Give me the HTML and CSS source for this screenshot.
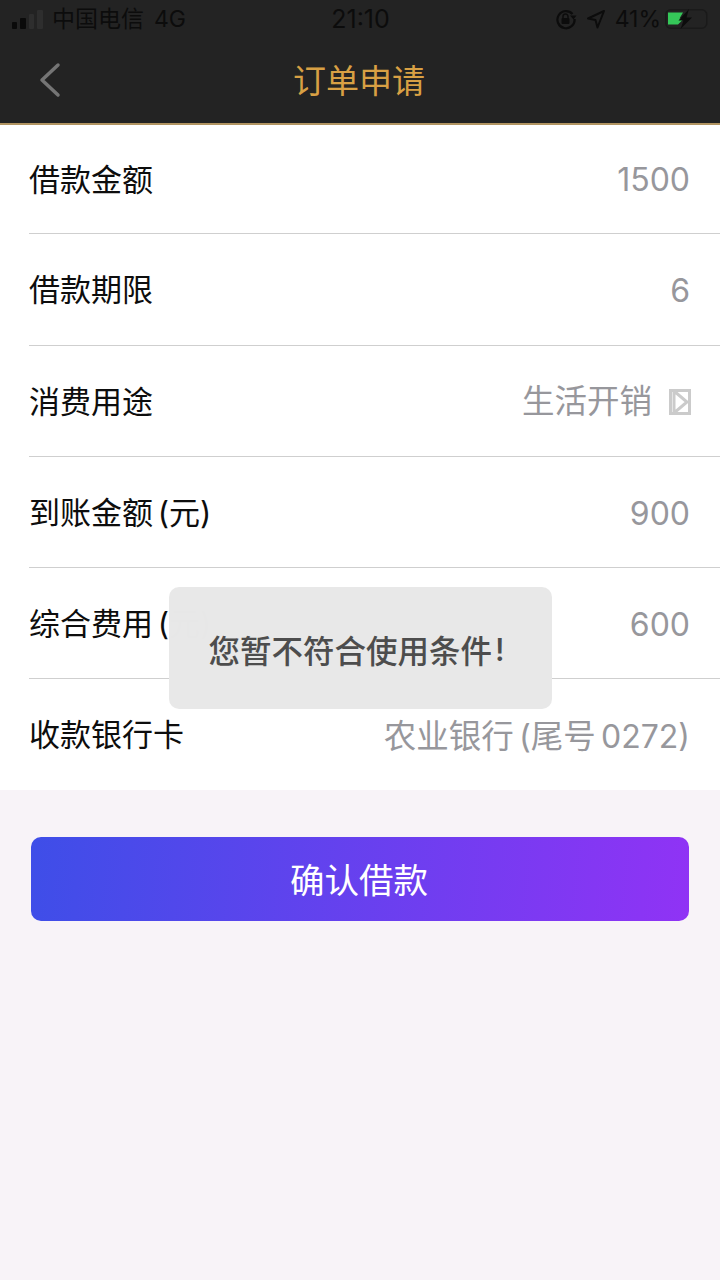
FILE: index.html
```html
<!DOCTYPE html>
<html lang="zh-CN">
<head>
<meta charset="utf-8">
<title>订单申请</title>
<link rel="stylesheet" href="styles.css">
</head>
<body>
<header class="header">
  <div class="status">
    <div class="status-left">
      <svg class="signal" width="32" height="22" viewBox="0 0 32 22"><rect x="0" y="14" width="5" height="7" rx="1" fill="#0a0a0a"/><rect x="8" y="10" width="6" height="11" rx="1" fill="#0a0a0a"/><rect x="17" y="6" width="5" height="15" rx="1" fill="#2e2e2e"/><rect x="25" y="2" width="6" height="19" rx="1" fill="#2e2e2e"/></svg>
      <span class="carrier">中国电信</span><span class="net">4G</span>
    </div>
    <div class="clock">21:10</div>
    <div class="status-right">
      <svg class="rot" width="22" height="22" viewBox="0 0 22 22"><path d="M17.500 6A8.600 8.600 0 1 0 19.600 11" fill="none" stroke="#0c0c0c" stroke-width="2.200"/><path d="M15 7.500h6.500L18.500 11.500z" fill="#0c0c0c"/><rect x="6.500" y="10" width="8" height="6" rx="1" fill="#0c0c0c"/><path d="M8 10V8.500a2.500 2.500 0 0 1 5 0V10" fill="none" stroke="#0c0c0c" stroke-width="1.500"/></svg>
      <svg class="loc" width="20" height="20" viewBox="0 0 20 20"><path d="M18 2 2 9.500l7.500 1.500 2 7.500z" fill="none" stroke="#0c0c0c" stroke-width="2" stroke-linejoin="round"/></svg>
      <span class="pct">41%</span>
      <svg class="batt" width="44" height="22" viewBox="0 0 44 22"><rect x="0.750" y="1.750" width="41" height="18.500" rx="5" fill="none" stroke="#1a1a1a" stroke-width="1.500"/><path d="M3 4.500h15l-3.500 6H19L13 16.500H3z" fill="#35c759"/><path d="M24 1 13.500 12.500h5L15.500 21 27 9.500h-5.500z" fill="#0c0c0c"/></svg>
    </div>
  </div>
  <div class="nav">
    <svg class="back" width="24" height="36" viewBox="0 0 24 36"><path d="M20 3 4 18l16 15" fill="none" stroke="#757575" stroke-width="3.500" stroke-linecap="round" stroke-linejoin="round"/></svg>
    <h1 class="title">订单申请</h1>
  </div>
</header>

<main>
  <section class="list">
    <div class="row"><span class="label">借款金额</span><span class="value"><span class="num">1500</span></span></div>
    <div class="row"><span class="label">借款期限</span><span class="value"><span class="num">6</span></span></div>
    <div class="row"><span class="label">消费用途</span><span class="value">生活开销<svg class="pick" width="22" height="26" viewBox="0 0 22 26"><rect x="1.500" y="1.500" width="19" height="23" fill="none" stroke="#cbcbcb" stroke-width="3"/><path d="M5 2 18 13 5 24z" fill="none" stroke="#cbcbcb" stroke-width="3"/></svg></span></div>
    <div class="row"><span class="label">到账金额 (元)</span><span class="value value-low"><span class="num">900</span></span></div>
    <div class="row"><span class="label">综合费用 (元)</span><span class="value value-low"><span class="num">600</span></span></div>
    <div class="row"><span class="label">收款银行卡</span><span class="value value-lower"><span class="mixed">农业银行 (尾号 <span class="num">0272)</span></span></span></div>
  </section>
  <div class="action"><button class="confirm">确认借款</button></div>
</main>

<div class="toast"><span>您暂不符合使用条件</span><span class="bang">!</span></div>
</body>
</html>
```
FILE: styles.css
```css
* { box-sizing: border-box; }
html, body { margin: 0; height: 100%; }
body {
  background: #f8f3f8;
  font-family: Inter, "Noto Sans CJK SC", sans-serif;
  min-height: 1280px;
  overflow: hidden;
  position: relative;
}
.header {
  background: #232323;
  height: 125px;
  border-bottom: 2px solid #b19461;
}
.status {
  height: 38px;
  padding: 0 11px 0 12px;
  display: grid;
  grid-template-columns: 1fr auto 1fr;
  align-items: center;
  color: #0c0c0c;
  font-size: 23px;
}
.status-left { display: flex; align-items: center; }
.signal { margin-right: 8px; }
.carrier { line-height: 1; }
.net { margin-left: 10px; line-height: 1; }
.clock { line-height: 1; font-size: 25px; }
.status-right { display: flex; align-items: center; justify-content: flex-end; gap: 9px; }
.pct { line-height: 1; }
.batt { margin-left: -5px; }
.nav {
  height: 85px;
  display: flex;
  align-items: center;
  justify-content: center;
  position: relative;
}
.back { position: absolute; left: 38px; top: 24px; }
.title {
  margin: 0;
  padding: 1px 2px 0 0;
  font-size: 33px;
  font-weight: 400;
  color: #d8a044;
  line-height: 1;
}
.list { background: #fff; padding-left: 29px; }
.row {
  height: 111px;
  border-bottom: 1px solid #cfcfcf;
  display: flex;
  align-items: center;
  justify-content: space-between;
  padding-right: 30px;
}
.row:first-child { height: 109px; }
.row:nth-child(2) { height: 112px; }
.row:last-child { border-bottom: 0; }
.label {
  font-size: 31px;
  color: #0d0d0d;
  line-height: 1;
  white-space: nowrap;
  word-spacing: -4px;
}
.value {
  font-size: 32.5px;
  color: #97979c;
  line-height: 1;
  padding-top: 2px;
  display: flex;
  align-items: center;
  white-space: nowrap;
}
.value-low { padding-top: 4px; }
.value-lower { padding-top: 5px; }
.num { font-size: 32px; }
.mixed { word-spacing: -4px; }
.pick { margin-left: 17px; margin-right: -1px; }
.action { padding: 47px 31px 0; }
.confirm {
  display: block;
  width: 100%;
  height: 84px;
  border: 0;
  border-radius: 10px;
  background: linear-gradient(95deg, #3e4ee8 0%, #9033f5 100%);
  color: #fff;
  font-family: inherit;
  font-size: 34.5px;
  padding: 0 2px 3px 0;
}
.toast {
  position: absolute;
  left: 169px;
  top: 587px;
  width: 383px;
  height: 122px;
  padding: 2px 8px 0 0;
  border-radius: 10px;
  background: rgba(232, 232, 232, 0.995);
  color: #4d4d4d;
  font-size: 31.500px;
  font-weight: 500;
  display: flex;
  align-items: center;
  justify-content: center;
  white-space: nowrap;
}
.bang { margin-left: 3px; }
```
